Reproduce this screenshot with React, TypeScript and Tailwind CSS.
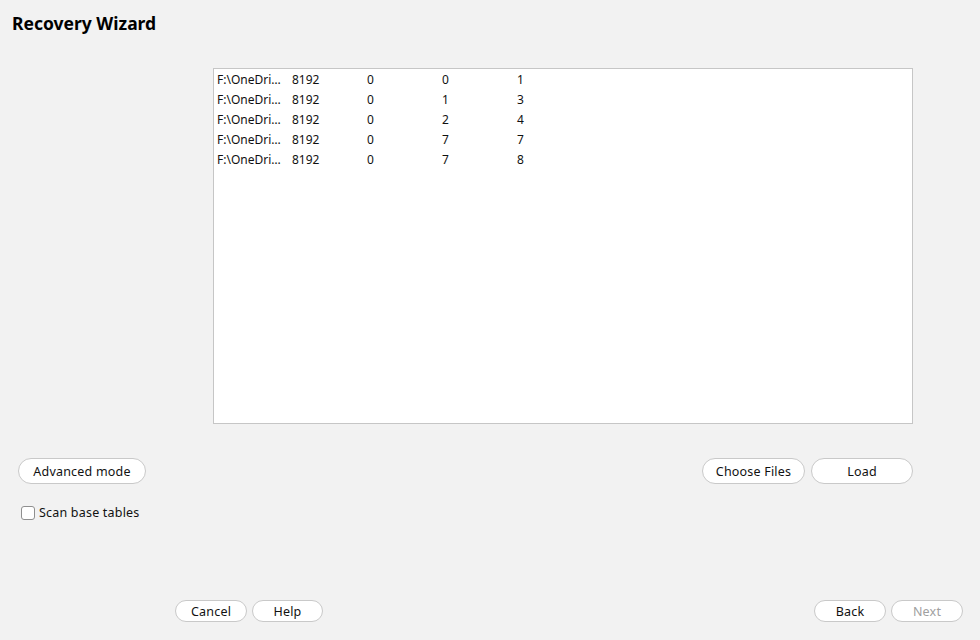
const rows = [
  ["F:\\OneDri…", "8192", "0", "0", "1"],
  ["F:\\OneDri…", "8192", "0", "1", "3"],
  ["F:\\OneDri…", "8192", "0", "2", "4"],
  ["F:\\OneDri…", "8192", "0", "7", "7"],
  ["F:\\OneDri…", "8192", "0", "7", "8"],
];

function PillButton({
  label,
  className = "",
  disabled = false,
}: {
  label: string;
  className?: string;
  disabled?: boolean;
}) {
  return (
    <button
      disabled={disabled}
      className={`rounded-full border border-[#c9c9c9] bg-white pt-[2px] text-[12.5px] leading-none tracking-[0.2px] ${
        disabled ? "text-[#a0a0a0]" : "text-[#111]"
      } ${className}`}
    >
      {label}
    </button>
  );
}

export default function App() {
  return (
    <div
      className="flex h-[640px] w-[980px] flex-col bg-[#f2f2f2] text-[#111]"
      style={{ fontFamily: '"Noto Sans", "Open Sans", sans-serif' }}
    >
      {/* HEADER */}
      <div className="px-3 pt-[11px]">
        <h1 className="text-[17.5px] font-bold leading-6 text-black">Recovery Wizard</h1>
      </div>

      {/* FILE LIST */}
      <div className="ml-[213px] mt-[33px] h-[356px] w-[700px] border border-[#c6c6c6] bg-white pt-[1px]">
        {rows.map((r, i) => (
          <div key={i} className="flex h-5 items-center pl-[3px] text-[12px]">
            {r.map((c, j) => (
              <span key={j} className="w-[75px] shrink-0 whitespace-nowrap">
                {c}
              </span>
            ))}
          </div>
        ))}
      </div>

      {/* ACTIONS */}
      <div className="mt-[34px] flex items-center justify-between pl-[18px] pr-[67px]">
        <PillButton label="Advanced mode" className="h-[26px] w-[128px]" />
        <div className="flex gap-[6px]">
          <PillButton label="Choose Files" className="h-[26px] w-[103px]" />
          <PillButton label="Load" className="h-[26px] w-[102px]" />
        </div>
      </div>

      <label className="ml-[21px] mt-[20px] flex items-center gap-1 text-[12.5px] tracking-[0.2px]">
        <span className="h-[14px] w-[14px] rounded-[3px] border border-[#8f8f8f] bg-white" />
        <span>Scan base tables</span>
      </label>

      {/* FOOTER */}
      <div className="mt-auto flex items-center justify-between pb-[18px] pl-[175px] pr-[17px]">
        <div className="flex gap-[5px]">
          <PillButton label="Cancel" className="h-[22px] w-[72px]" />
          <PillButton label="Help" className="h-[22px] w-[71px]" />
        </div>
        <div className="flex gap-[5px]">
          <PillButton label="Back" className="h-[22px] w-[72px]" />
          <PillButton label="Next" className="h-[22px] w-[72px]" disabled />
        </div>
      </div>
    </div>
  );
}
